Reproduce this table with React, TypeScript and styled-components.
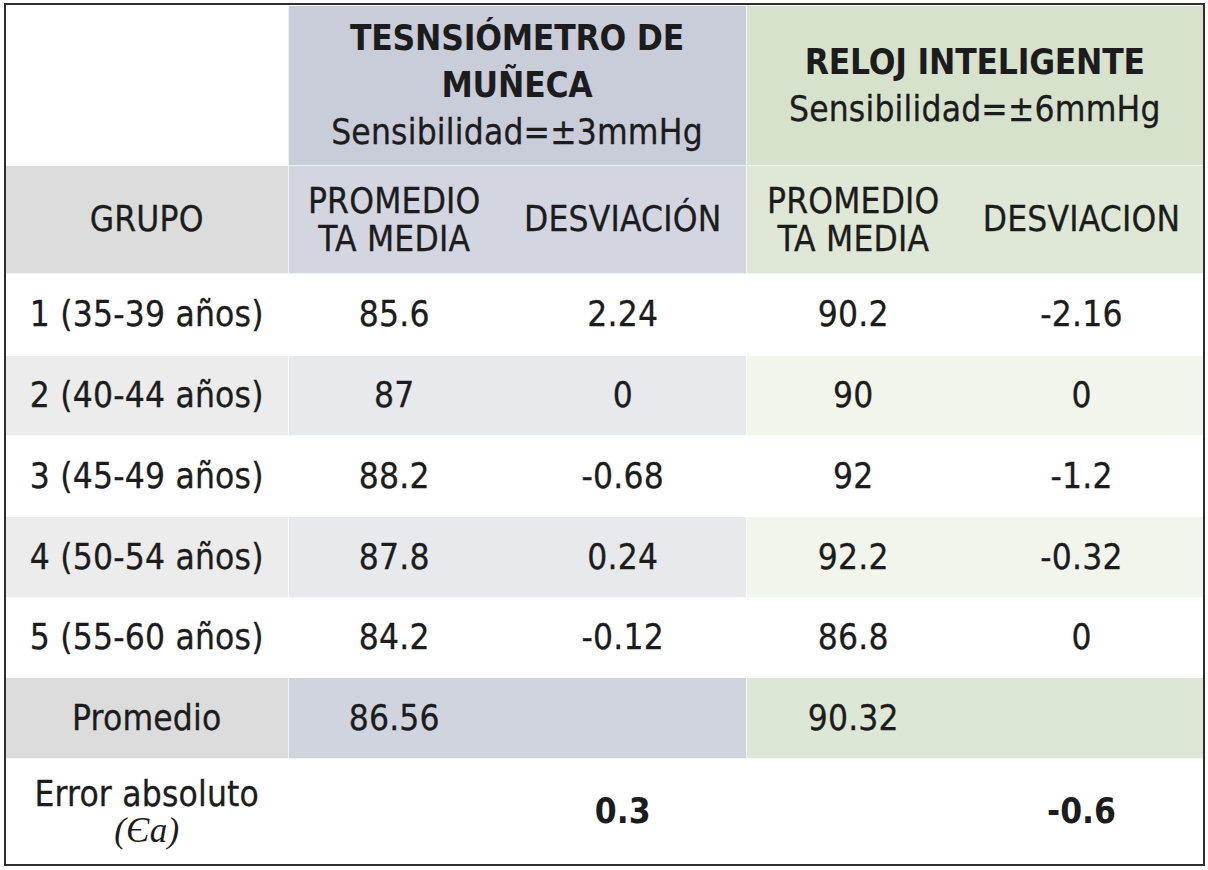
import React from "react";
import styled, { createGlobalStyle } from "styled-components";

type Tone = "white" | "gray" | "grayDark" | "blueTop" | "blueSub" | "blueStripe" | "blueSum" | "greenTop" | "greenSub" | "greenStripe" | "greenSum";

const tones: Record<Tone, string> = {
  white: "#ffffff",
  gray: "#ececec",
  grayDark: "#dcdcdc",
  blueTop: "#c9cdd9",
  blueSub: "#d3d6e1",
  blueStripe: "#e8e9ec",
  blueSum: "#d0d4df",
  greenTop: "#d7e2cd",
  greenSub: "#dfe8d7",
  greenStripe: "#f1f5eb",
  greenSum: "#dde7d6",
};

const GlobalStyle = createGlobalStyle`
  html, body {
    margin: 0;
    padding: 0;
    background: #ffffff;
  }
  body {
    font-family: "DejaVu Sans Condensed", "DejaVu Sans", sans-serif;
    color: #1c1c1c;
  }
`;

const Page = styled.div`
  padding: 3px 3px 0 4px;
`;

const Frame = styled.div`
  width: 1197px;
  border: 2px solid #2e2e2e;
`;

const Table = styled.table`
  width: 100%;
  border-collapse: collapse;
  table-layout: fixed;
`;

// $edge marks the first column of a device group (gets a faint white divider on its left)
const Cell = styled.td<{ $tone?: Tone; $h?: number; $bold?: boolean; $tight?: boolean; $edge?: boolean }>`
  background: ${(p) => tones[p.$tone ?? "white"]};
  height: ${(p) => (p.$h ? `${p.$h}px` : "auto")};
  padding: 0;
  border-top: 1px solid rgba(255, 255, 255, 0.7);
  border-left: ${(p) => (p.$edge ? "1px solid rgba(255, 255, 255, 0.7)" : "none")};
  text-align: center;
  vertical-align: middle;
  font-size: 35px;
  font-weight: ${(p) => (p.$bold ? 700 : 400)};
  line-height: ${(p) => (p.$tight ? "38px" : "47px")};
  letter-spacing: ${(p) => (p.$bold ? "0" : "0.2px")};
  -webkit-text-stroke: ${(p) => (p.$bold ? "0" : "0.3px")};
`;

const Line = styled.div<{ $bold?: boolean }>`
  font-weight: ${(p) => (p.$bold ? 700 : 400)};
  -webkit-text-stroke: ${(p) => (p.$bold ? "0" : "0.3px")};
  letter-spacing: ${(p) => (p.$bold ? "-0.2px" : "0.2px")};
`;

const Symbol = styled.div`
  font-family: "Liberation Serif", "DejaVu Serif", serif;
  font-style: italic;
  font-size: 35px;
  line-height: 36px;
  -webkit-text-stroke: 0;
`;

type Row = { group: string; a: string; b: string; c: string; d: string };

const rows: Row[] = [
  { group: "1 (35-39 años)", a: "85.6", b: "2.24", c: "90.2", d: "-2.16" },
  { group: "2 (40-44 años)", a: "87", b: "0", c: "90", d: "0" },
  { group: "3 (45-49 años)", a: "88.2", b: "-0.68", c: "92", d: "-1.2" },
  { group: "4 (50-54 años)", a: "87.8", b: "0.24", c: "92.2", d: "-0.32" },
  { group: "5 (55-60 años)", a: "84.2", b: "-0.12", c: "86.8", d: "0" },
];

const heights = [81, 79, 80, 80, 79];

export default function App() {
  return (
    <Page>
      <GlobalStyle />
      <Frame>
        <Table>
          <colgroup>
            <col style={{ width: 282 }} />
            <col style={{ width: 212 }} />
            <col style={{ width: 246 }} />
            <col style={{ width: 214 }} />
            <col style={{ width: 243 }} />
          </colgroup>
          <tbody>
            <tr>
              <Cell $h={159} />
              <Cell $tone="blueTop" colSpan={2} $edge>
                <Line $bold>TESNSIÓMETRO DE</Line>
                <Line $bold>MUÑECA</Line>
                <Line>Sensibilidad=±3mmHg</Line>
              </Cell>
              <Cell $tone="greenTop" colSpan={2} $edge>
                <Line $bold>RELOJ INTELIGENTE</Line>
                <Line>Sensibilidad=±6mmHg</Line>
              </Cell>
            </tr>
            <tr>
              <Cell $tone="grayDark" $h={107}>GRUPO</Cell>
              <Cell $tone="blueSub" $tight $edge>
                PROMEDIO
                <br />
                TA MEDIA
              </Cell>
              <Cell $tone="blueSub">DESVIACIÓN</Cell>
              <Cell $tone="greenSub" $tight $edge>
                PROMEDIO
                <br />
                TA MEDIA
              </Cell>
              <Cell $tone="greenSub">DESVIACION</Cell>
            </tr>
            {rows.map((r, i) => {
              const striped = i % 2 === 1;
              return (
                <tr key={r.group}>
                  <Cell $h={heights[i]} $tone={striped ? "gray" : "white"}>{r.group}</Cell>
                  <Cell $tone={striped ? "blueStripe" : "white"} $edge>{r.a}</Cell>
                  <Cell $tone={striped ? "blueStripe" : "white"}>{r.b}</Cell>
                  <Cell $tone={striped ? "greenStripe" : "white"} $edge>{r.c}</Cell>
                  <Cell $tone={striped ? "greenStripe" : "white"}>{r.d}</Cell>
                </tr>
              );
            })}
            <tr>
              <Cell $h={80} $tone="grayDark">Promedio</Cell>
              <Cell $tone="blueSum" $edge>86.56</Cell>
              <Cell $tone="blueSum" />
              <Cell $tone="greenSum" $edge>90.32</Cell>
              <Cell $tone="greenSum" />
            </tr>
            <tr>
              <Cell $h={105} $tight>
                Error absoluto
                <Symbol>(Єa)</Symbol>
              </Cell>
              <Cell $edge />
              <Cell $bold>0.3</Cell>
              <Cell $edge />
              <Cell $bold>-0.6</Cell>
            </tr>
          </tbody>
        </Table>
      </Frame>
    </Page>
  );
}
